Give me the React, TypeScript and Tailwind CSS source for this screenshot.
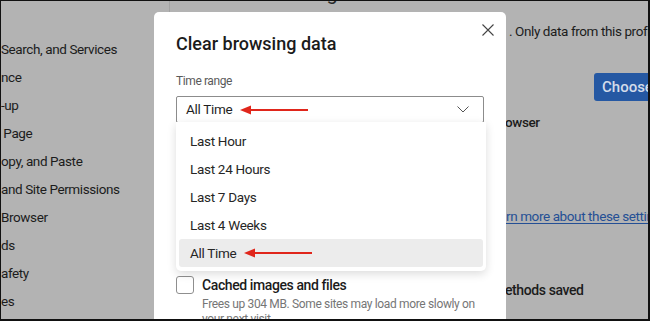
const sidebar = [
  "Search, and Services",
  "nce",
  "-up",
  "\u2009Page",
  "opy, and Paste",
  "and Site Permissions",
  "Browser",
  "ds",
  "afety",
  "es",
]

const ranges = ["Last Hour", "Last 24 Hours", "Last 7 Days", "Last 4 Weeks"]

const Arrow = () => (
  <svg width="68" height="10" viewBox="0 0 68 10" className="ml-[8px]">
    <line x1="8" y1="5" x2="68" y2="5" stroke="#e0261b" strokeWidth="2" />
    <path d="M0 5 L11 0.5 L11 9.5 Z" fill="#e0261b" />
  </svg>
)

const App = () => {
  return (
    <div
      className="relative w-[650px] h-[321px] overflow-hidden bg-[#b3b3b3] border-t border-l border-r-2 border-b-2 border-[#111] text-[#1c1c1c]"
      style={{ fontFamily: "Roboto, 'Noto Sans', sans-serif" }}
    >
      {/* page behind the overlay */}
      <div className="flex h-full">
        <div className="w-[169px] shrink-0 border-r border-[#a2a2a2] pt-[38px]">
          {sidebar.map((s) => (
            <div key={s} className="h-[28px] text-[13.5px] tracking-[-0.4px] leading-[20px] whitespace-nowrap">
              {s}
            </div>
          ))}
        </div>
        <div className="flex-1 min-w-0 overflow-hidden pt-[20px] text-[13.5px] tracking-[-0.4px] whitespace-nowrap">
          <div className="-mt-[36px] ml-[40px] h-[16px] text-[20px] leading-[16px] text-[#2a2a2a]">
            Clear browsing data on close
          </div>
          <div className="mt-[20px] ml-[339px] leading-[20px]">. Only data from this profi</div>
          <div className="flex justify-end mt-[32px]">
            <div className="w-[54px] h-[28px] bg-[#2558a3] rounded-l-[3px] text-[#d4dcea] text-[15px] tracking-normal font-medium pl-[8px] leading-[28px] overflow-hidden">
              Choose
            </div>
          </div>
          <div className="mt-[11px] ml-[335px] leading-[20px] font-medium">owser</div>
          <div className="mt-[74px] ml-[336px] leading-[20px] text-[#244f95] underline underline-offset-2">
            rn more about these settings
          </div>
          <div className="mt-[54px] ml-[335px] leading-[20px] text-[14px] font-medium">ethods saved</div>
        </div>
      </div>

      {/* dialog */}
      <div className="absolute left-[153px] top-[11px] w-[352px] h-[330px] bg-white rounded-[5px] px-[22px] pt-[20px]">
        <button className="absolute right-[10px] top-[10px] w-[16px] h-[16px] flex items-center justify-center">
          <svg width="12" height="12" viewBox="0 0 12 12">
            <path d="M0.5 0.5 L11.5 11.5 M11.5 0.5 L0.5 11.5" stroke="#444" strokeWidth="1.1" />
          </svg>
        </button>
        <h1 className="text-[18px] leading-[24px] font-medium text-[#1b1b1b]">Clear browsing data</h1>
        <div className="mt-[17px] text-[12px] tracking-[-0.4px] leading-[16px] text-[#5a5a5a]">Time range</div>
        <div className="relative mt-[7px] w-[308px]">
          <div className="h-[27px] border border-[#8c8c8c] rounded-[2px] flex items-center pl-[9px] pr-[14px] text-[13.5px] tracking-[-0.3px] text-[#1f1f1f]">
            <span>All Time</span>
            <Arrow />
            <svg width="12" height="7" viewBox="0 0 12 7" className="ml-auto">
              <path d="M0.5 0.5 L6 6 L11.5 0.5" stroke="#555" strokeWidth="1" fill="none" />
            </svg>
          </div>
          <div className="absolute left-0 top-[26px] w-[310px] bg-white rounded-b-[5px] shadow-[0_3px_10px_rgba(0,0,0,0.14)] px-[3px] pt-[5px] pb-[4px] z-10 text-[13.5px] tracking-[-0.3px] text-[#262626]">
            {ranges.map((r) => (
              <div key={r} className="h-[28px] flex items-center pl-[11px]">
                {r}
              </div>
            ))}
            <div className="h-[28px] flex items-center pl-[11px] bg-[#ececec] rounded-[3px]">
              <span>All Time</span>
              <Arrow />
            </div>
          </div>
        </div>
        <div className="mt-[153px] flex">
          <div className="w-[18px] h-[18px] border border-[#8f8f8f] rounded-[3px] shrink-0" />
          <div className="ml-[8px]">
            <div className="text-[14px] tracking-[-0.4px] leading-[18px] font-medium text-[#1b1b1b]">Cached images and files</div>
            <div className="mt-[3px] text-[12px] tracking-[-0.35px] leading-[15px] text-[#767676] whitespace-nowrap">
              Frees up 304 MB. Some sites may load more slowly on
              <br />
              your next visit
            </div>
          </div>
        </div>
      </div>
    </div>
  )
}

export default App
